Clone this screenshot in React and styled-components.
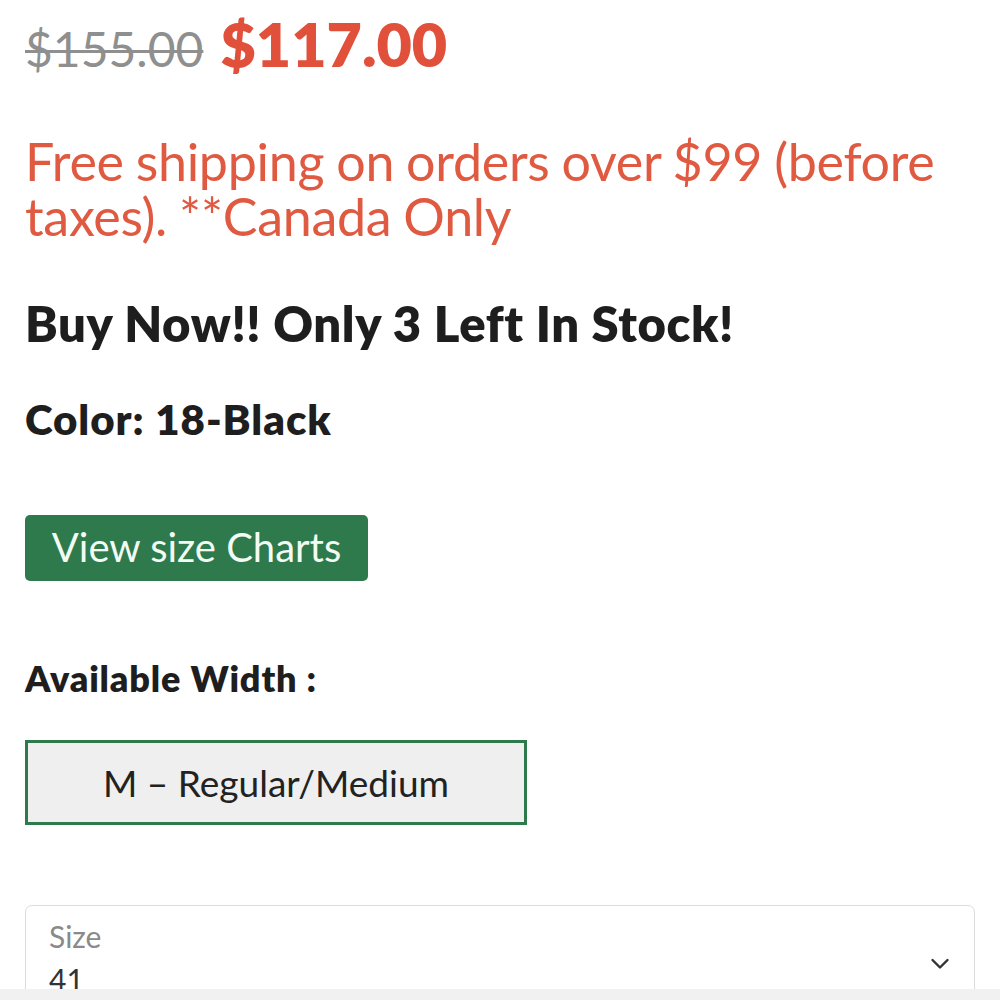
import React from "react";
import styled, { createGlobalStyle } from "styled-components";

const Global = createGlobalStyle`
  html, body { margin: 0; padding: 0; background: #ffffff; }
  body { font-family: Lato, "Open Sans", sans-serif; overflow: hidden; }
`;

const Page = styled.div`
  width: 1000px;
  height: 1000px;
  box-sizing: border-box;
  padding: 11px 25px 0 25px;
  display: flex;
  flex-direction: column;
  overflow: hidden;
  position: relative;
  & > * { flex-shrink: 0; }
`;

const PriceRow = styled.div`
  display: flex;
  align-items: baseline;
  gap: 17px;
  height: 66px;
  line-height: 66px;
`;

const OldPrice = styled.span`
  font-size: 48px;
  color: #8f8f8f;
  text-decoration: line-through;
  text-decoration-thickness: 3px;
  font-weight: 400;
`;

const NewPrice = styled.span`
  font-size: 61px;
  font-weight: 800;
  color: #e1503a;
`;

const Shipping = styled.p`
  margin: 57px 0 0 0;
  font-size: 52px;
  line-height: 55px;
  color: #e05a41;
  font-weight: 400;
  letter-spacing: -0.3px;
  word-spacing: -1px;
`;

const StockLine = styled.h2`
  margin: 54px 0 0 0;
  font-size: 49px;
  line-height: 50px;
  font-weight: 800;
  color: #1e1e1e;
  letter-spacing: 0.6px;
`;

const ColorLine = styled.div`
  margin-top: 49px;
  font-size: 42px;
  line-height: 44px;
  font-weight: 800;
  color: #1e1e1e;
  letter-spacing: 0.95px;
`;

const ChartButton = styled.button`
  margin-top: 74px;
  align-self: flex-start;
  width: 343px;
  height: 66px;
  border: none;
  border-radius: 5px;
  background: #2f7a4c;
  color: #f2fbf4;
  font-family: Lato, sans-serif;
  font-size: 40px;
  font-weight: 400;
  padding: 0 0 2px 0;
  display: flex;
  align-items: center;
  justify-content: center;
`;

const SectionLabel = styled.div`
  margin-top: 77px;
  font-size: 36px;
  line-height: 40px;
  font-weight: 800;
  color: #1e1e1e;
  letter-spacing: 0.85px;
`;

const WidthOption = styled.div`
  margin-top: 42px;
  width: 502px;
  height: 85px;
  box-sizing: border-box;
  border: 3px solid #2f7a4c;
  background: #efefef;
  display: flex;
  align-items: center;
  justify-content: center;
  font-size: 37px;
  color: #222;
`;

const SelectBox = styled.div`
  margin-top: 80px;
  width: 950px;
  height: 120px;
  box-sizing: border-box;
  border: 1.5px solid #dcdcdc;
  border-radius: 7px;
  padding: 12px 23px 0 23px;
  display: flex;
  align-items: flex-start;
  justify-content: space-between;
`;

const SelectText = styled.div`
  display: flex;
  flex-direction: column;
`;

const SelectLabel = styled.span`
  font-size: 30px;
  line-height: 36px;
  color: #8a8a8a;
`;

const SelectValue = styled.span`
  font-size: 30px;
  line-height: 40px;
  color: #333;
  margin-top: 5px;
`;

const Chevron = styled.svg`
  width: 20px;
  height: 12px;
  margin-right: 1px;
  margin-top: 40px;
`;

const BottomBar = styled.div`
  position: absolute;
  left: 0;
  right: 0;
  bottom: 0;
  height: 11px;
  background: #f1f1f1;
`;

export default function App() {
  return (
    <>
      <Global />
      <Page>
        <PriceRow>
          <OldPrice>$155.00</OldPrice>
          <NewPrice>$117.00</NewPrice>
        </PriceRow>
        <Shipping>
          Free shipping on orders over $99 (before taxes). **Canada Only
        </Shipping>
        <StockLine>Buy Now!! Only 3 Left In Stock!</StockLine>
        <ColorLine>Color: 18-Black</ColorLine>
        <ChartButton>View size Charts</ChartButton>
        <SectionLabel>Available Width :</SectionLabel>
        <WidthOption>M – Regular/Medium</WidthOption>
        <SelectBox>
          <SelectText>
            <SelectLabel>Size</SelectLabel>
            <SelectValue>41</SelectValue>
          </SelectText>
          <Chevron viewBox="0 0 20 12">
            <path d="M2.5 2 L10 9.5 L17.5 2" fill="none" stroke="#333" strokeWidth="2.4" strokeLinecap="round" strokeLinejoin="round" />
          </Chevron>
        </SelectBox>
        <BottomBar />
      </Page>
    </>
  );
}
